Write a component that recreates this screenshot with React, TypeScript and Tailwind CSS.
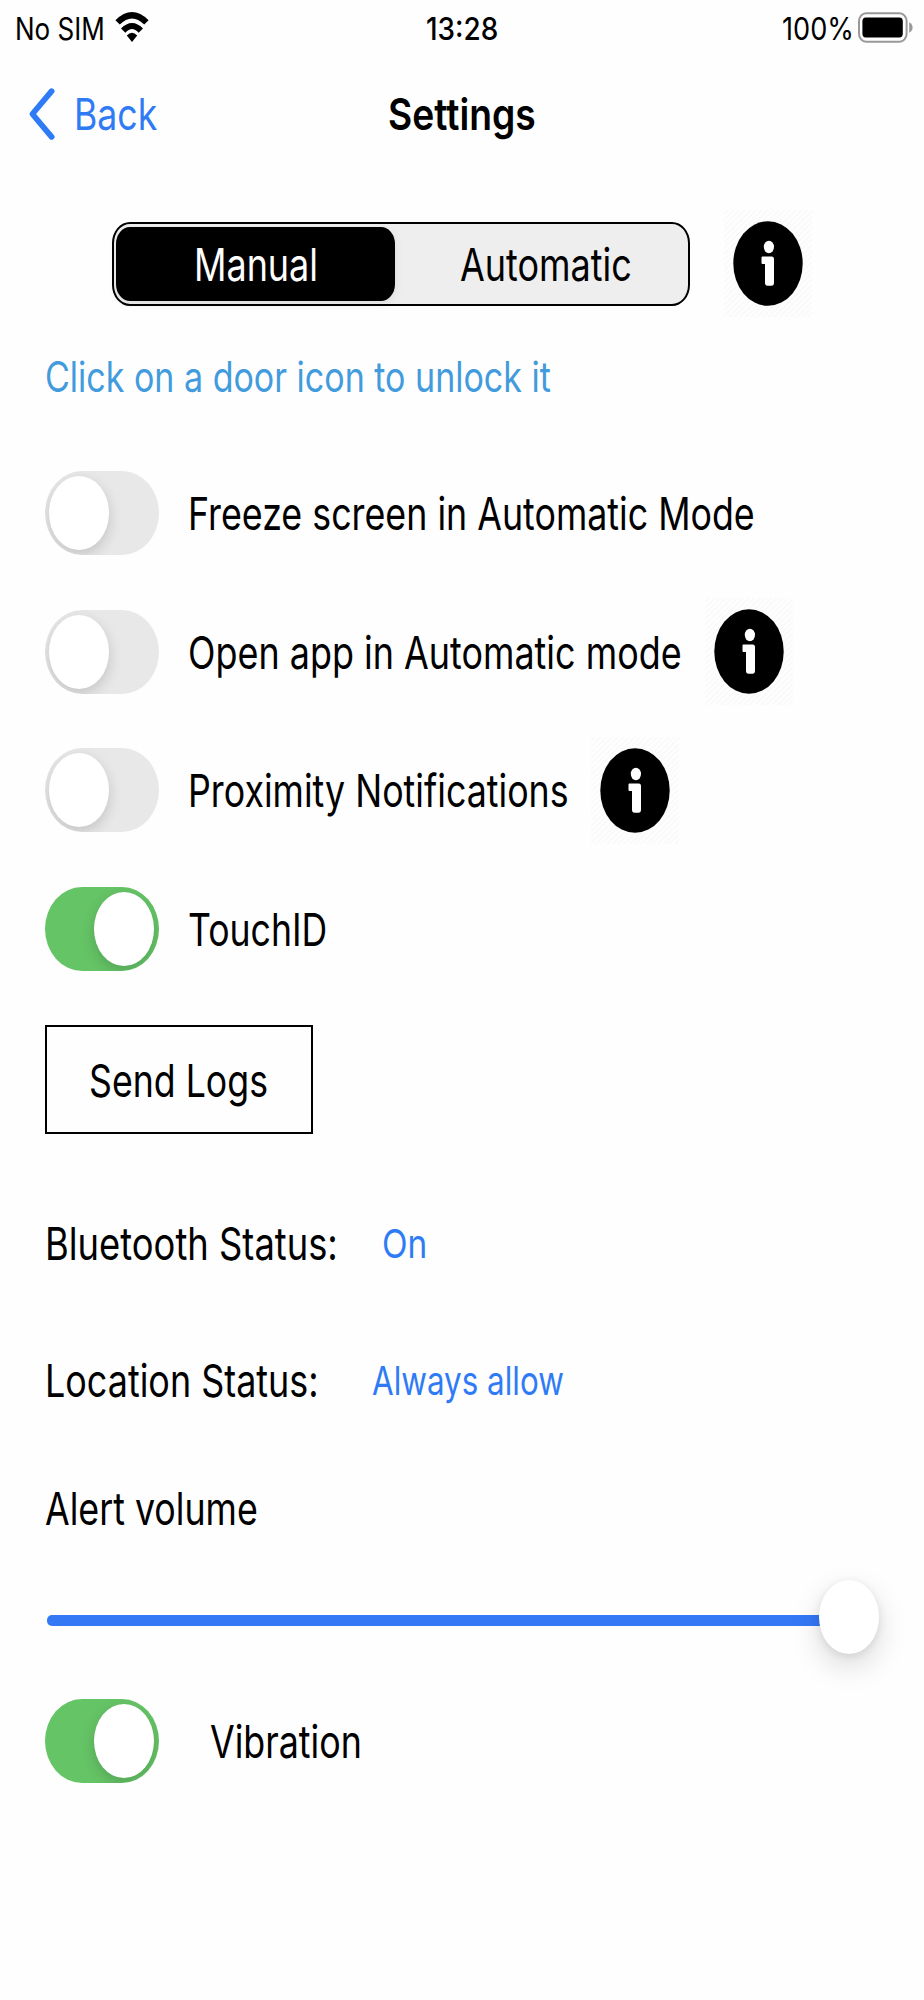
import type { ReactNode } from 'react'

/* Condensed text: `box` sets the laid-out width, `type` the size and horizontal scale. */
function Label({ box, type, children }: { box: string; type: string; children: ReactNode }) {
  return (
    <span className={`block shrink-0 ${box}`}>
      <span className={`block w-max origin-left whitespace-nowrap leading-none ${type}`}>{children}</span>
    </span>
  )
}

function Toggle({ on = false }: { on?: boolean }) {
  return (
    <button
      role="switch"
      aria-checked={on}
      className={`flex h-[84px] w-[114px] shrink-0 items-center overflow-hidden rounded-[37px_/_42px] pr-[5px] pl-1 ${
        on ? 'justify-end bg-[#65c466]' : 'justify-start bg-[#e8e8e8]'
      }`}
    >
      <span className="block h-[74px] w-[60px] rounded-[50%] bg-white shadow-[0_5px_14px_rgba(0,0,0,0.16)]" />
    </button>
  )
}

function InfoIcon() {
  return (
    <span className="block h-[107px] w-[88px] shrink-0 bg-[repeating-linear-gradient(135deg,#fefefe_0px,#fefefe_2px,#fafafa_2px,#fafafa_4px)]">
      <svg viewBox="0 0 88 107" className="block h-full w-full">
        <ellipse cx="44" cy="53.5" rx="34.7" ry="42.3" fill="#000" />
        <ellipse cx="44.9" cy="37" rx="5.1" ry="6.2" fill="#fff" />
        <path
          d="M38.4 46.5h9.3a2.3 2.6 0 0 1 2.3 2.6v23.6a2.6 3 0 0 1-2.6 3h-3.8a2.6 3 0 0 1-2.6-3V54h-2.6a.9 1.2 0 0 1-.9-1.2v-5.1a.9 1.2 0 0 1 .9-1.2z"
          fill="#fff"
        />
      </svg>
    </span>
  )
}

function StatusBar() {
  return (
    <div className="grid h-[58px] shrink-0 grid-cols-[1fr_auto_1fr] items-center pr-[11px] pb-px pl-[14.5px]">
      <div className="flex items-center gap-2.5">
        <Label box="w-[90px]" type="text-[31px] scale-x-[0.84]">No SIM</Label>
        <svg viewBox="0 0 34 30" className="mt-[-3px] h-[30px] w-[34px]">
          <path d="M2.6 10.4 Q17 -3.8 31.4 10.4" fill="none" stroke="#000" strokeWidth="6.2" />
          <path d="M8.2 18.6 Q17 9.4 25.8 18.6" fill="none" stroke="#000" strokeWidth="6" />
          <path d="M17 30 L11.8 23.6 Q17 17.8 22.2 23.6 Z" fill="#000" />
        </svg>
      </div>
      <Label box="w-[76px]" type="text-[31px] font-medium scale-x-[0.9]">13:28</Label>
      <div className="flex items-center justify-end gap-1">
        <Label box="w-[72px]" type="text-[31px] scale-x-[0.875]">100%</Label>
        <svg viewBox="0 0 55 31" className="mt-[-2px] h-[31px] w-[55px]">
          <rect x="1" y="1.2" width="47.6" height="28.6" rx="7" ry="8" fill="none" stroke="#999" strokeWidth="2" />
          <rect x="4.4" y="5.4" width="40.4" height="20" rx="3.4" ry="4" fill="#000" />
          <path d="M51.2 10.2 Q54.6 12 54.6 15.5 T51.2 20.8Z" fill="#999" />
        </svg>
      </div>
    </div>
  )
}

function NavBar() {
  return (
    <div className="grid h-28 shrink-0 grid-cols-[1fr_auto_1fr] items-center px-[27px]">
      <div className="flex items-center gap-[17px] text-[#2f7bf6]">
        <svg viewBox="0 0 30 54" className="h-[54px] w-[30px]">
          <path
            d="M24.6 4.2 L5.4 27 L24.6 49.8"
            fill="none"
            stroke="currentColor"
            strokeWidth="5.8"
            strokeLinecap="round"
            strokeLinejoin="round"
          />
        </svg>
        <Label box="w-[83px]" type="text-[44px] scale-x-[0.81]">Back</Label>
      </div>
      <h1>
        <Label box="w-[148px]" type="text-[44px] font-semibold scale-x-[0.8466]">Settings</Label>
      </h1>
      <div />
    </div>
  )
}

function ModePicker() {
  return (
    <div className="mt-[39px] flex h-[108px] shrink-0 items-center gap-[34.5px] pl-28">
      <div className="mt-0.5 flex h-[84px] w-[577.5px] items-center rounded-[18px_/_21px] border-2 border-black bg-[#eeeeee] pl-[2px]">
        <div className="flex h-[74px] w-[279px] items-center justify-center rounded-[14px_/_17px] bg-black text-white shadow-[0_3px_10px_rgba(0,0,0,0.08)]">
          <Label box="w-[124px]" type="text-[45px] scale-x-[0.7986]">Manual</Label>
        </div>
        <div className="flex flex-1 items-center justify-center pl-[10px]">
          <Label box="w-[172px]" type="text-[45px] scale-x-[0.7996]">Automatic</Label>
        </div>
      </div>
      <InfoIcon />
    </div>
  )
}

function ToggleRow({ on, info, children }: { on?: boolean; info?: boolean; children: ReactNode }) {
  return (
    <div className="flex h-[138.6px] shrink-0 items-center pl-[45px]">
      <Toggle on={on} />
      <div className="ml-[29px] flex items-center gap-[24px]">
        <div className="pt-[1.5px]">{children}</div>
        {info && <InfoIcon />}
      </div>
    </div>
  )
}

export default function App() {
  return (
    <main className="flex h-[2000px] w-[924px] flex-col overflow-hidden bg-[#fefefe] font-['Inter',sans-serif] text-black">
      <StatusBar />
      <NavBar />
      <ModePicker />
      <div className="flex h-[126.7px] shrink-0 items-center pb-[6px] pl-[45px] text-[#419bdc]">
        <Label box="w-[507px]" type="text-[42px] scale-x-[0.8095]">Click on a door icon to unlock it</Label>
      </div>

      <ToggleRow>
        <Label box="w-[566px]" type="text-[45px] scale-x-[0.795]">Freeze screen in Automatic Mode</Label>
      </ToggleRow>
      <ToggleRow info>
        <Label box="w-[493px]" type="text-[45px] scale-x-[0.7982]">Open app in Automatic mode</Label>
      </ToggleRow>
      <ToggleRow info>
        <Label box="w-[379px]" type="text-[45px] scale-x-[0.7952]">Proximity Notifications</Label>
      </ToggleRow>
      <ToggleRow on>
        <Label box="w-[139px]" type="text-[45px] scale-x-[0.7911]">TouchID</Label>
      </ToggleRow>

      <button className="mt-[27px] ml-[45px] flex h-[109px] w-[268px] shrink-0 items-center justify-center border-2 border-black pt-0.5 pr-0.5">
        <Label box="w-[179px]" type="text-[45px] scale-x-[0.793]">Send Logs</Label>
      </button>

      <div className="mt-[41px] flex h-[137px] shrink-0 items-center gap-[44px] pl-[45.3px]">
        <Label box="w-[293px]" type="text-[45px] scale-x-[0.8077]">Bluetooth Status:</Label>
        <Label box="w-[45px]" type="text-[40px] scale-x-[0.8349] text-[#2f7bf6]">On</Label>
      </div>
      <div className="flex h-[137px] shrink-0 items-center gap-[53px] pl-[45.3px]">
        <Label box="w-[274px]" type="text-[45px] scale-x-[0.7983]">Location Status:</Label>
        <Label box="w-[192px]" type="text-[40px] scale-x-[0.7845] text-[#2f7bf6]">Always allow</Label>
      </div>

      <div className="flex h-[119px] shrink-0 items-center pl-[45px]">
        <Label box="w-[212px]" type="text-[45px] scale-x-[0.7945]">Alert volume</Label>
      </div>
      <div className="flex h-[98px] shrink-0 items-center pl-[47px]">
        <div className="mt-[7px] h-[10.7px] w-[790px] rounded-l-[5px] bg-[#3478f6]" />
        <div className="-ml-[18px] h-[74px] w-[60px] rounded-[50%] bg-white shadow-[0_12px_30px_rgba(0,0,0,0.15),0_2px_8px_rgba(0,0,0,0.09)]" />
      </div>

      <div className="mt-[33px] flex h-[84px] shrink-0 items-center gap-[51px] pl-[45px]">
        <Toggle on />
        <Label box="w-[152px]" type="text-[45px] scale-x-[0.7955]">Vibration</Label>
      </div>
    </main>
  )
}
